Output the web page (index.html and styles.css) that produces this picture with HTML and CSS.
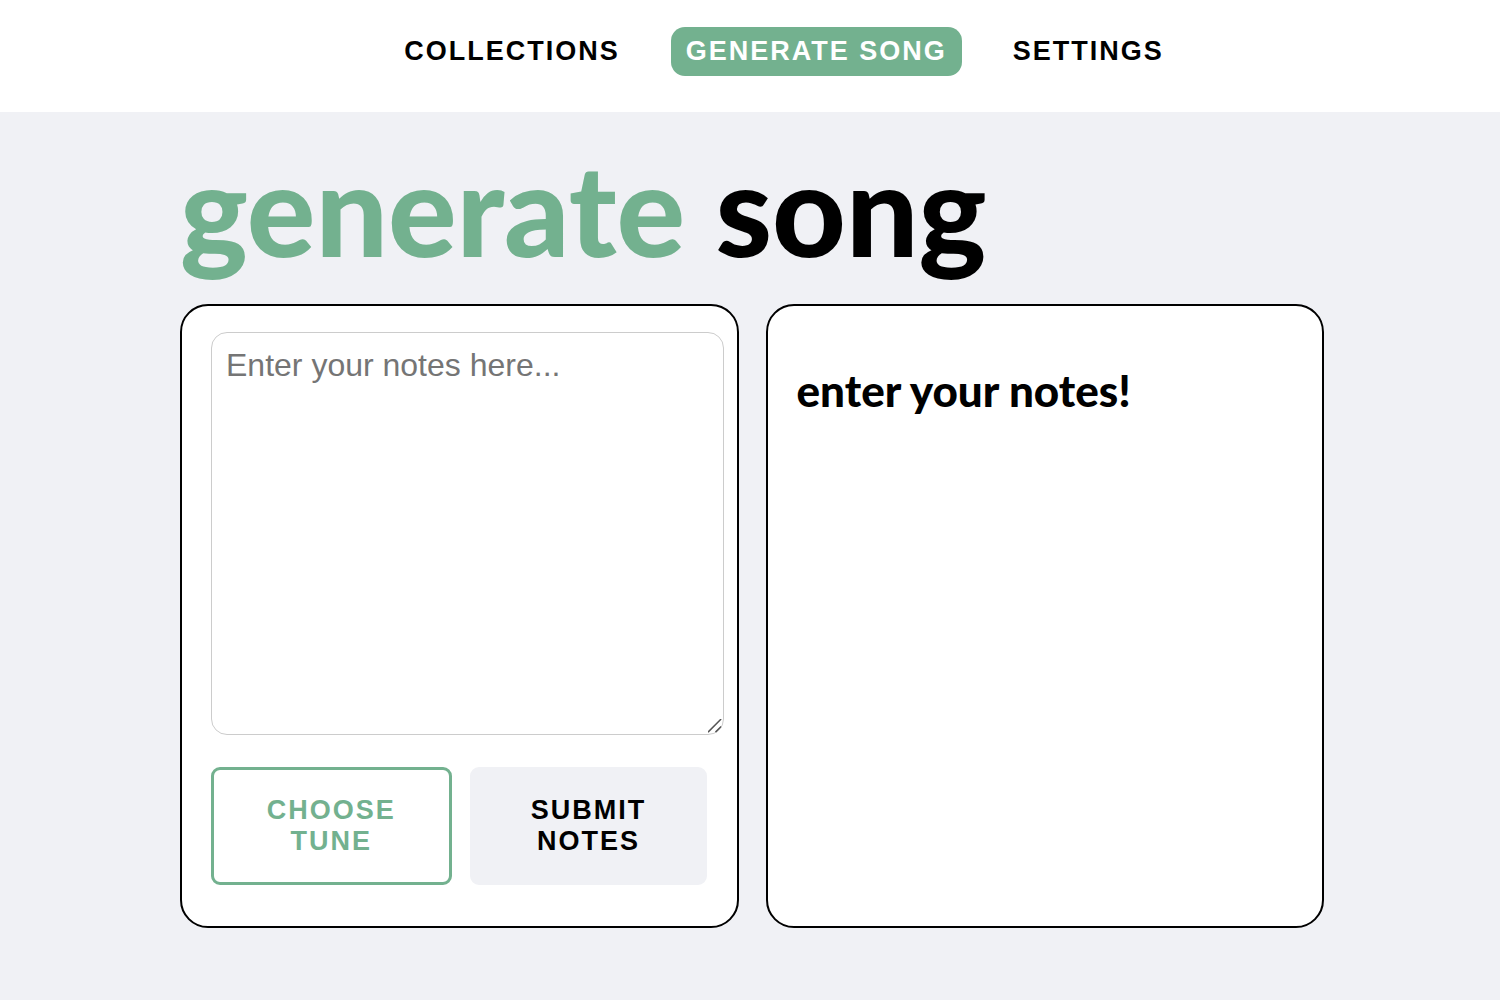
FILE: index.html
```html
<!DOCTYPE html>
<html lang="en">
<head>
<meta charset="utf-8">
<meta name="viewport" content="width=device-width, initial-scale=1">
<title>Generate Song</title>
<link rel="stylesheet" href="styles.css">
</head>
<body>
<header class="site-header">
  <nav class="nav">
    <a class="nav-link" href="#collections">COLLECTIONS</a>
    <a class="nav-link nav-link-active" href="#generate" aria-current="page">GENERATE SONG</a>
    <a class="nav-link" href="#settings">SETTINGS</a>
  </nav>
</header>
<main class="page">
  <h1 class="title"><span class="accent">generate</span> song</h1>
  <div class="panels">
    <form class="panel">
      <textarea class="notes" aria-label="Notes" placeholder="Enter your notes here..."></textarea>
      <div class="actions">
        <button class="button button-outline" type="button">CHOOSE TUNE</button>
        <button class="button" type="button">SUBMIT NOTES</button>
      </div>
    </form>
    <section class="panel">
      <h2 class="prompt">enter your notes!</h2>
    </section>
  </div>
</main>
</body>
</html>
```
FILE: styles.css
```css
* {
  box-sizing: border-box;
}

body {
  margin: 0;
  min-height: 100vh;
  background: #f0f1f5;
  color: #000;
  font-family: "Liberation Sans", Arial, sans-serif;
}

.site-header {
  padding: 27px 0 36px 68px;
  background: #fff;
}

.nav {
  display: flex;
  justify-content: center;
  gap: 36px;
}

.nav-link {
  padding: 9px 15px;
  border-radius: 14px;
  color: #000;
  font-size: 27px;
  font-weight: 700;
  line-height: 31px;
  letter-spacing: 2px;
  text-decoration: none;
}

.nav-link-active {
  background: #73b18f;
  color: #fff;
}

.page {
  padding: 48px 176px 72px 180px;
}

.title {
  margin: 0 0 48px;
  font-family: Lato, sans-serif;
  font-size: 128px;
  font-weight: 900;
  line-height: 96px;
  white-space: nowrap;
}

.accent {
  color: #73b18f;
}

.panels {
  display: grid;
  grid-template-columns: 1fr 1fr;
  gap: 27px;
}

.panel {
  padding: 26px 29px 41px;
  border: 2px solid #000;
  border-radius: 28px;
  background: #fff;
}

.notes {
  display: block;
  width: calc(100% + 16px);
  height: 403px;
  margin-bottom: 32px;
  padding: 14px;
  border: 1px solid #ccc;
  border-radius: 16px;
  background: #fff;
  font: 32px/36px "Liberation Sans", Arial, sans-serif;
  resize: both;
}

.notes::placeholder {
  color: #757575;
}

.notes::-webkit-resizer {
  background: url("data:image/svg+xml,%3Csvg xmlns='http://www.w3.org/2000/svg' viewBox='0 0 16 16'%3E%3Cpath d='M0 14 14 0M8 14l6-6' stroke='%23555' stroke-width='1.6'/%3E%3C/svg%3E") center / 100% no-repeat;
}

.actions {
  display: grid;
  grid-template-columns: 241fr 238fr;
  gap: 18px;
}

.button {
  padding: 25px 40px;
  border: 3px solid #f0f1f5;
  border-radius: 9px;
  background: #f0f1f5;
  color: #000;
  font: 700 27px/31px "Liberation Sans", Arial, sans-serif;
  letter-spacing: 2px;
}

.button-outline {
  border-color: #73b18f;
  background: #fff;
  color: #73b18f;
}

.prompt {
  margin: 32px 0 0;
  font-family: Lato, sans-serif;
  font-size: 44px;
  font-weight: 900;
  line-height: 52px;
}
```
